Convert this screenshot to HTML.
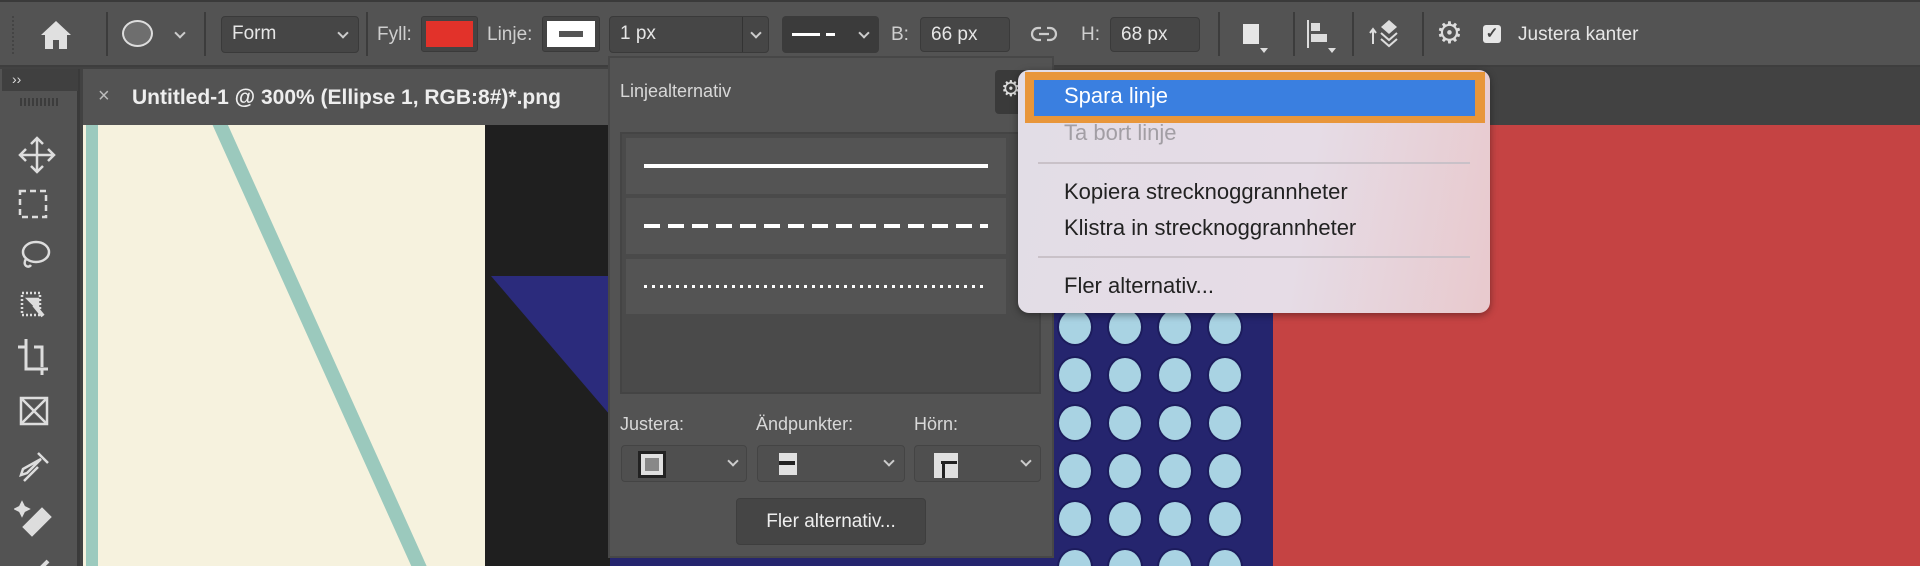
<!DOCTYPE html>
<html style="overflow:hidden;width:1920px;height:566px"><head><meta charset="utf-8"><style>
*{margin:0;padding:0;box-sizing:border-box}
html,body{width:1920px;height:566px;overflow:hidden}
body{background:#424242;font-family:"Liberation Sans",sans-serif;color:#ddd}
#w{position:relative;width:1920px;height:566px;overflow:hidden}
.a{position:absolute}
.sep{position:absolute;top:12px;width:2px;height:44px;background:#3c3c3c}
.inp{position:absolute;background:#464646;border:1px solid #3a3a3a;border-radius:4px;color:#e6e6e6;font-size:19px;line-height:34px;padding-left:10px}
.lbl{position:absolute;font-size:19px;color:#cfcfcf;top:24px}
.chev{position:absolute;width:8px;height:8px;border-right:2px solid #ccc;border-bottom:2px solid #ccc;transform:rotate(45deg)}
.circ{position:absolute;width:32px;height:34px;border-radius:50%;background:#a9d3e3;box-shadow:0 0 0 2px #1c1c5c}
.mi{position:absolute;left:1064px;font-size:22px;color:#222}
</style></head><body><div id="w">
<!-- toolbar -->
<div class="a" style="left:0;top:0;width:1920px;height:67px;background:#535353;border-top:2px solid #3a3a3a;border-bottom:2px solid #3e3e3e"></div>
<div class="a" style="left:12px;top:16px;width:2px;height:38px;border-left:2px dotted #444"></div>
<svg class="a" style="left:40px;top:20px" width="32" height="30" viewBox="0 0 32 30"><path d="M16 1 L31 15 L27 15 L27 29 L19 29 L19 20 L13 20 L13 29 L5 29 L5 15 L1 15 Z" fill="#e0e0e0"/></svg>
<div class="sep" style="left:106px"></div>
<div class="a" style="left:122px;top:20px;width:31px;height:27px;border-radius:50%;border:2px solid #ddd;background:#6e6e6e"></div>
<div class="chev" style="left:176px;top:29px"></div>
<div class="sep" style="left:204px"></div>
<div class="inp" style="left:221px;top:16px;width:138px;height:37px">Form</div>
<div class="chev" style="left:339px;top:29px"></div>
<div class="sep" style="left:366px"></div>
<div class="lbl" style="left:377px">Fyll:</div>
<div class="a" style="left:421px;top:16px;width:57px;height:36px;background:#444;border:1px solid #3a3a3a;border-radius:3px"><div class="a" style="left:4px;top:4px;width:47px;height:26px;background:#e2322a"></div></div>
<div class="lbl" style="left:487px">Linje:</div>
<div class="a" style="left:542px;top:16px;width:58px;height:36px;background:#444;border:1px solid #3a3a3a;border-radius:3px"><div class="a" style="left:4px;top:4px;width:48px;height:26px;background:#fff"><div class="a" style="left:12px;top:10px;width:24px;height:6px;background:#555"></div></div></div>
<div class="inp" style="left:609px;top:16px;width:160px;height:37px">1 px</div>
<div class="a" style="left:742px;top:17px;width:1px;height:35px;background:#333"></div>
<div class="chev" style="left:752px;top:29px"></div>
<div class="a" style="left:782px;top:16px;width:97px;height:37px;background:#3b3b3b;border-radius:4px"></div>
<div class="a" style="left:792px;top:33px;width:28px;height:3px;background:#fff"></div>
<div class="a" style="left:826px;top:33px;width:9px;height:3px;background:#fff"></div>
<div class="chev" style="left:860px;top:29px"></div>
<div class="lbl" style="left:891px">B:</div>
<div class="inp" style="left:920px;top:17px;width:90px;height:35px">66 px</div>
<svg class="a" style="left:1030px;top:25px" width="28" height="18" viewBox="0 0 28 18" fill="none" stroke="#ccc" stroke-width="2.2"><path d="M11 3H8a6 6 0 0 0 0 12h3M17 3h3a6 6 0 0 1 0 12h-3M9 9h10"/></svg>
<div class="lbl" style="left:1081px">H:</div>
<div class="inp" style="left:1110px;top:17px;width:90px;height:35px">68 px</div>
<div class="sep" style="left:1218px"></div>
<div class="a" style="left:1243px;top:24px;width:16px;height:20px;background:#e6e6e6"></div>
<div class="a" style="left:1260px;top:48px;border:4px solid transparent;border-top:5px solid #ddd"></div>
<div class="sep" style="left:1293px"></div>
<div class="a" style="left:1307px;top:20px;width:2px;height:28px;background:#ddd"></div>
<div class="a" style="left:1311px;top:23px;width:9px;height:8px;background:#ddd"></div>
<div class="a" style="left:1311px;top:34px;width:16px;height:8px;background:#ddd"></div>
<div class="a" style="left:1328px;top:48px;border:4px solid transparent;border-top:5px solid #ddd"></div>
<div class="sep" style="left:1352px"></div>
<svg class="a" style="left:1367px;top:18px" width="36" height="36" viewBox="0 0 36 36"><path d="M6 26V12M3 15l3-4 3 4" stroke="#ddd" stroke-width="2" fill="none"/><path d="M22 2l8 7-8 7-8-7z" fill="#ddd"/><path d="M14 15l8 7 8-7M14 21l8 7 8-7" stroke="#ddd" stroke-width="2" fill="none"/></svg>
<div class="sep" style="left:1422px"></div>
<div class="a" style="left:1436px;top:18px;font-size:30px;color:#ddd;line-height:32px">⚙</div>
<div class="a" style="left:1483px;top:25px;width:18px;height:18px;background:#e6e6e6;border-radius:3px;color:#444;font-size:15px;line-height:18px;text-align:center;font-weight:bold">✓</div>
<div class="lbl" style="left:1518px;color:#e6e6e6">Justera kanter</div>

<!-- left panel -->
<div class="a" style="left:0;top:69px;width:80px;height:497px;background:#535353;border-right:3px solid #3a3a3a"></div>
<div class="a" style="left:2px;top:69px;width:76px;height:22px;background:#404040;color:#ddd;font-size:14px;padding-left:10px;line-height:20px">››</div>
<div class="a" style="left:20px;top:98px;width:38px;height:8px;background:repeating-linear-gradient(90deg,#3c3c3c 0 2px,transparent 2px 4px)"></div>
<svg class="a" style="left:14px;top:135px" width="50" height="440" viewBox="0 0 50 440" fill="none" stroke="#ddd" stroke-width="2.5">
<path d="M23 3v34M6 20h34M17 9l6-6 6 6M17 31l6 6 6-6M12 14l-6 6 6 6M34 14l6 6-6 6"/>
<rect x="6" y="56" width="26" height="26" stroke-dasharray="6 4"/>
<ellipse cx="22" cy="117" rx="13" ry="10"/><path d="M12 124c-4 6 2 10 5 6"/>
<rect x="8" y="158" width="18" height="22" stroke-dasharray="2 2"/><path d="M14 164h10v10z" fill="#ddd"/><path d="M20 170l9 11" stroke-width="4"/>
<path d="M4 212h8v22h22M20 212h8v20M12 204v8M28 234v6" stroke-width="3"/>
<rect x="7" y="263" width="26" height="26"/><path d="M7 263l26 26M33 263l-26 26"/>
<path d="M10 346l14-14M24 318l10 10M27 324l-14 14-6 2 2-6z"/>
<path d="M10 392l18-18 8 8-18 18z" fill="#ddd"/><path d="M8 368l2 4 4 2-4 2-2 4-2-4-4-2 4-2z" fill="#ddd"/>
<path d="M18 442l16-16" stroke-width="4"/>
</svg>

<!-- doc tab -->
<div class="a" style="left:83px;top:69px;width:540px;height:56px;background:#535353"></div>
<div class="a" style="left:98px;top:85px;font-size:20px;color:#bbb">×</div>
<div class="a" style="left:132px;top:86px;font-size:21px;font-weight:bold;color:#eee;white-space:nowrap">Untitled-1 @ 300% (Ellipse 1, RGB:8#)*.png</div>

<!-- canvas -->
<div class="a" style="left:83px;top:125px;width:527px;height:441px;background:#1f1f1f;overflow:hidden">
<div class="a" style="left:0;top:0;width:402px;height:441px;background:#f6f2de"></div>
<div class="a" style="left:3px;top:-20px;width:12px;height:480px;background:#9ccabe;border-radius:0 0 0 40px"></div>
<svg class="a" style="left:0;top:0" width="527" height="441"><line x1="135" y1="-5" x2="340" y2="450" stroke="#9bc9bd" stroke-width="14"/><path d="M408 151 L527 151 L527 290 Z" fill="#2b2b7c"/></svg>
</div>
<div class="a" style="left:610px;top:125px;width:663px;height:441px;background:#25256e"></div>
<div class="a" style="left:1273px;top:125px;width:647px;height:441px;background:#c54343"></div>
<div class="circ" style="left:1059px;top:310px"></div><div class="circ" style="left:1109px;top:310px"></div><div class="circ" style="left:1159px;top:310px"></div><div class="circ" style="left:1209px;top:310px"></div>
<div class="circ" style="left:1059px;top:358px"></div><div class="circ" style="left:1109px;top:358px"></div><div class="circ" style="left:1159px;top:358px"></div><div class="circ" style="left:1209px;top:358px"></div>
<div class="circ" style="left:1059px;top:406px"></div><div class="circ" style="left:1109px;top:406px"></div><div class="circ" style="left:1159px;top:406px"></div><div class="circ" style="left:1209px;top:406px"></div>
<div class="circ" style="left:1059px;top:454px"></div><div class="circ" style="left:1109px;top:454px"></div><div class="circ" style="left:1159px;top:454px"></div><div class="circ" style="left:1209px;top:454px"></div>
<div class="circ" style="left:1059px;top:502px"></div><div class="circ" style="left:1109px;top:502px"></div><div class="circ" style="left:1159px;top:502px"></div><div class="circ" style="left:1209px;top:502px"></div>
<div class="circ" style="left:1059px;top:550px"></div><div class="circ" style="left:1109px;top:550px"></div><div class="circ" style="left:1159px;top:550px"></div><div class="circ" style="left:1209px;top:550px"></div>

<!-- line options panel -->
<div class="a" style="left:608px;top:56px;width:446px;height:502px;background:#535353;border:2px solid #474747"></div>
<div class="a" style="left:620px;top:81px;font-size:18px;color:#d8d8d8">Linjealternativ</div>
<div class="a" style="left:995px;top:70px;width:36px;height:44px;background:#3a3a3a;border-radius:4px;color:#ddd;font-size:22px;padding:6px 0 0 6px">⚙</div>
<div class="a" style="left:620px;top:132px;width:421px;height:262px;background:#4a4a4a;border:2px solid #444"></div>
<div class="a" style="left:626px;top:138px;width:380px;height:56px;background:#545454"></div>
<div class="a" style="left:626px;top:198px;width:380px;height:56px;background:#545454"></div>
<div class="a" style="left:626px;top:259px;width:380px;height:55px;background:#545454"></div>
<div class="a" style="left:644px;top:164px;width:344px;height:4px;background:#fff"></div>
<div class="a" style="left:644px;top:224px;width:344px;height:4px;background:repeating-linear-gradient(90deg,#fff 0 16px,transparent 16px 24px)"></div>
<div class="a" style="left:644px;top:285px;width:342px;height:3px;background:repeating-linear-gradient(90deg,#fff 0 3px,transparent 3px 8px)"></div>
<div class="a" style="left:620px;top:414px;font-size:18px;color:#d8d8d8">Justera:</div>
<div class="a" style="left:756px;top:414px;font-size:18px;color:#d8d8d8">Ändpunkter:</div>
<div class="a" style="left:914px;top:414px;font-size:18px;color:#d8d8d8">Hörn:</div>
<div class="a" style="left:621px;top:445px;width:126px;height:37px;border:1px solid #444;border-radius:4px;background:#4f4f4f"></div>
<div class="a" style="left:757px;top:445px;width:148px;height:37px;border:1px solid #444;border-radius:4px;background:#4f4f4f"></div>
<div class="a" style="left:914px;top:445px;width:127px;height:37px;border:1px solid #444;border-radius:4px;background:#4f4f4f"></div>
<div class="a" style="left:638px;top:451px;width:28px;height:27px;background:#e0e0e0;border:3px solid #222;outline:3px solid #e0e0e0;outline-offset:-9px"></div>
<div class="a" style="left:645px;top:458px;width:14px;height:13px;background:#888"></div>
<div class="a" style="left:779px;top:453px;width:18px;height:22px;background:#e0e0e0"></div><div class="a" style="left:779px;top:461px;width:16px;height:4px;background:#222"></div>
<div class="a" style="left:934px;top:453px;width:24px;height:25px;background:#e0e0e0"></div><div class="a" style="left:941px;top:461px;width:16px;height:3px;background:#222"></div><div class="a" style="left:942px;top:461px;width:3px;height:17px;background:#222"></div>
<div class="chev" style="left:729px;top:457px"></div><div class="chev" style="left:885px;top:457px"></div><div class="chev" style="left:1022px;top:457px"></div>
<div class="a" style="left:736px;top:498px;width:190px;height:47px;background:#454545;border:1px solid #3e3e3e;border-radius:4px;color:#eee;font-size:19px;text-align:center;line-height:45px">Fler alternativ...</div>

<!-- context menu -->
<div class="a" style="left:1018px;top:70px;width:472px;height:243px;border-radius:11px;background:linear-gradient(100deg,#e2dde6 0%,#e6dce6 60%,#e8c9cd 100%);box-shadow:0 2px 8px rgba(0,0,0,.4)"></div>
<div class="a" style="left:1025px;top:72px;width:460px;height:51px;background:#e8963a"></div>
<div class="a" style="left:1034px;top:80px;width:441px;height:36px;background:#3a7fe0"></div>
<div class="mi" style="top:83px;color:#fff">Spara linje</div>
<div class="mi" style="top:120px;color:#a29ea4">Ta bort linje</div>
<div class="a" style="left:1038px;top:162px;width:432px;height:2px;background:#c9c1c8"></div>
<div class="mi" style="top:179px">Kopiera strecknoggrannheter</div>
<div class="mi" style="top:215px">Klistra in strecknoggrannheter</div>
<div class="a" style="left:1038px;top:256px;width:432px;height:2px;background:#c9c1c8"></div>
<div class="mi" style="top:273px">Fler alternativ...</div>
</div></body></html>
